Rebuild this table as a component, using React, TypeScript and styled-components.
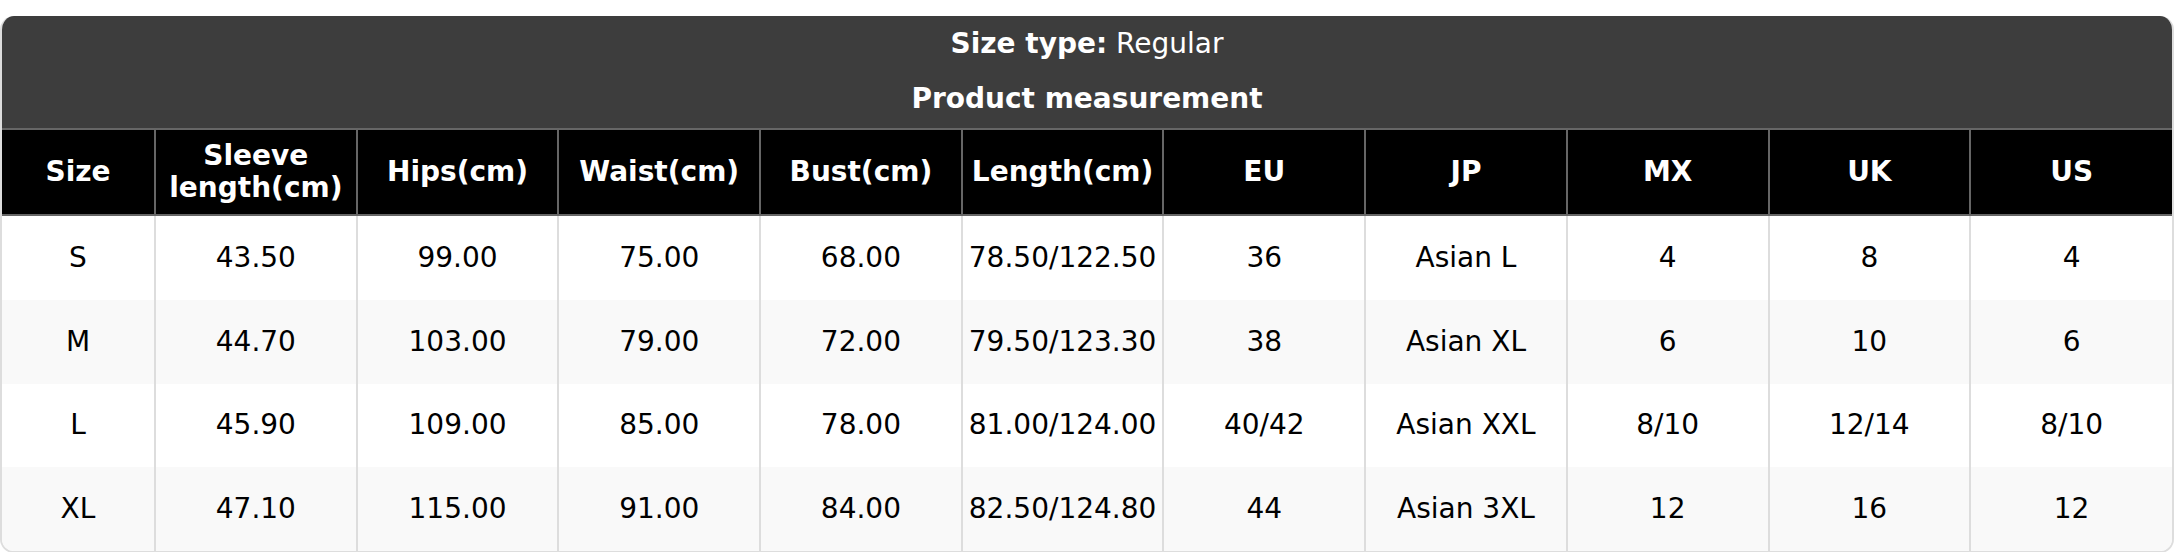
import React from "react";
import styled, { createGlobalStyle } from "styled-components";

const Global = createGlobalStyle`
  html, body { margin: 0; padding: 0; background: #ffffff; }
  body { font-family: "DejaVu Sans", Verdana, sans-serif; }
`;

const Card = styled.div`
  margin-top: 16px;
  border: 2px solid #dddddd;
  border-top: none;
  border-radius: 14px;
  overflow: hidden;
  background: #ffffff;
`;

const TitleBand = styled.div`
  background: #3d3d3d;
  color: #ffffff;
  text-align: center;
  font-size: 28px;
  padding: 11px 0 13px;
  display: flex;
  flex-direction: column;
  gap: 22px;
`;

const TitleLine = styled.div`
  line-height: 33px;
`;

const Bold = styled.span`
  font-weight: 700;
`;

const Table = styled.table`
  width: 100%;
  border-collapse: collapse;
  table-layout: fixed;
  font-size: 28px;
`;

const HeadCell = styled.th<{ $narrow?: boolean }>`
  background: #000000;
  color: #ffffff;
  font-weight: 700;
  height: 84px;
  padding: 0 4px;
  line-height: 32px;
  border: 2px solid #666666;
  text-align: center;
  vertical-align: middle;
  width: ${(p) => (p.$narrow ? "144px" : "auto")};
  &:first-child { border-left: none; }
  &:last-child { border-right: none; }
`;

const Row = styled.tr<{ $alt: boolean }>`
  background: ${(p) => (p.$alt ? "#f9f9f9" : "#ffffff")};
`;

const Cell = styled.td`
  color: #000000;
  height: 83.75px;
  padding: 0 4px;
  line-height: 32px;
  text-align: center;
  vertical-align: middle;
  border-left: 2px solid #dddddd;
  border-right: 2px solid #dddddd;
  &:first-child { border-left: none; }
  &:last-child { border-right: none; }
`;

const headers: { label: React.ReactNode; narrow?: boolean }[] = [
  { label: "Size", narrow: true },
  { label: <>Sleeve<br />length(cm)</> },
  { label: "Hips(cm)" },
  { label: "Waist(cm)" },
  { label: "Bust(cm)" },
  { label: "Length(cm)" },
  { label: "EU" },
  { label: "JP" },
  { label: "MX" },
  { label: "UK" },
  { label: "US" },
];

const rows: string[][] = [
  ["S", "43.50", "99.00", "75.00", "68.00", "78.50/122.50", "36", "Asian L", "4", "8", "4"],
  ["M", "44.70", "103.00", "79.00", "72.00", "79.50/123.30", "38", "Asian XL", "6", "10", "6"],
  ["L", "45.90", "109.00", "85.00", "78.00", "81.00/124.00", "40/42", "Asian XXL", "8/10", "12/14", "8/10"],
  ["XL", "47.10", "115.00", "91.00", "84.00", "82.50/124.80", "44", "Asian 3XL", "12", "16", "12"],
];

export default function App() {
  return (
    <>
      <Global />
      <Card>
        <TitleBand>
          <TitleLine>
            <Bold>Size type:</Bold> Regular
          </TitleLine>
          <TitleLine>
            <Bold>Product measurement</Bold>
          </TitleLine>
        </TitleBand>
        <Table>
          <thead>
            <tr>
              {headers.map((h, i) => (
                <HeadCell key={i} $narrow={h.narrow}>
                  {h.label}
                </HeadCell>
              ))}
            </tr>
          </thead>
          <tbody>
            {rows.map((r, i) => (
              <Row key={i} $alt={i % 2 === 1}>
                {r.map((c, j) => (
                  <Cell key={j}>{c}</Cell>
                ))}
              </Row>
            ))}
          </tbody>
        </Table>
      </Card>
    </>
  );
}
